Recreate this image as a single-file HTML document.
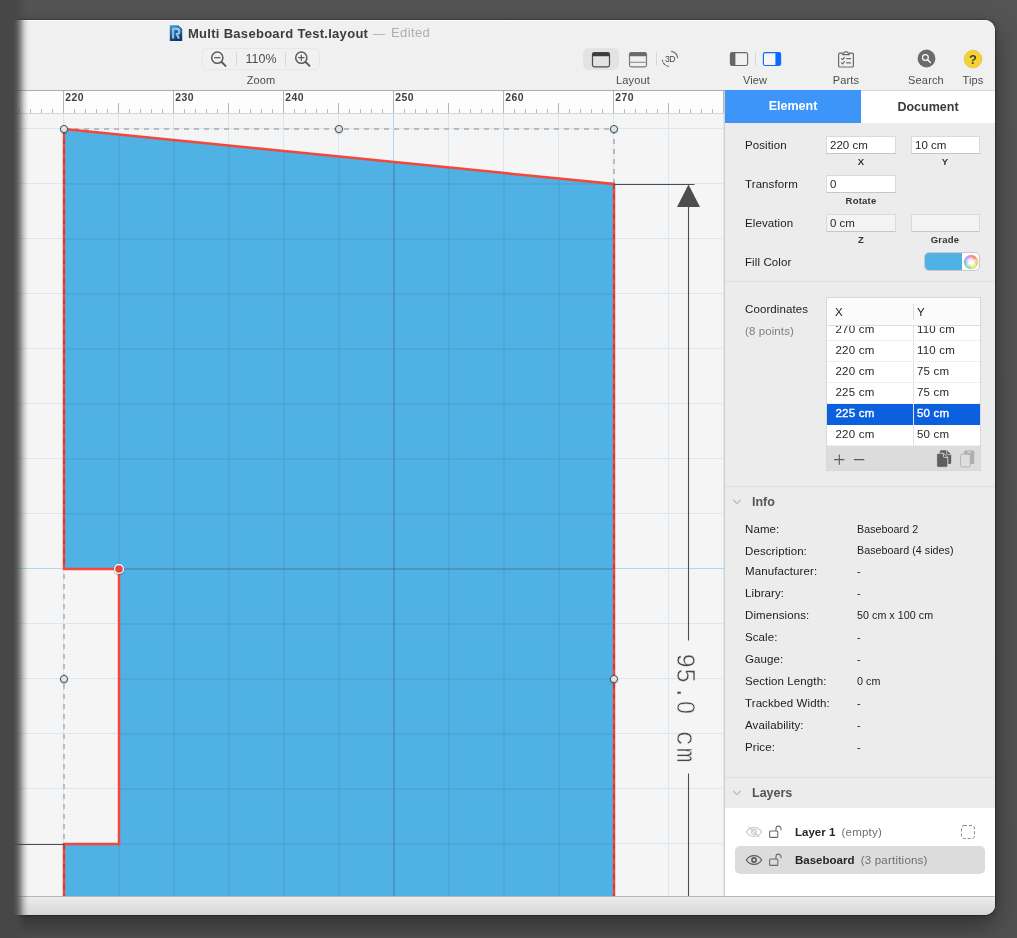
<!DOCTYPE html>
<html lang="en">
<head>
<meta charset="utf-8">
<title>Multi Baseboard Test.layout</title>
<style>
*{box-sizing:border-box;margin:0;padding:0}
html,body{width:1017px;height:938px;overflow:hidden}
body{background:#555;font-family:"Liberation Sans",sans-serif;font-size:12px;color:#262626;position:relative}
.bgshade{position:absolute;left:0;top:0;width:1017px;height:938px;background:linear-gradient(to bottom,#545454 0,#505050 100%)}
.win{position:absolute;left:-30px;top:20px;width:1025px;height:895px;border-radius:10px;background:#f0f0f0;
 box-shadow:0 0 0 0.5px rgba(0,0,0,0.45),0 11px 24px rgba(0,0,0,0.38),0 1px 6px rgba(0,0,0,0.18);overflow:hidden}
.page{position:absolute;left:30px;top:-20px;width:1017px;height:938px;will-change:transform}
.abs{position:absolute}
.tb{left:0;top:20px;width:995px;height:70px;background:#f0f0f0;border-top:1px solid #fbfbfb}
.tbline{left:0;top:90px;width:725px;height:1px;background:#adadad}
.title{left:188px;top:26px;height:16px;line-height:16px;font-size:13px;font-weight:bold;color:#3c3c3c;white-space:nowrap;letter-spacing:0.29px}
.dash{left:373px;top:33.5px;width:12px;height:1.8px;background:#b8b8b8}
.edited{left:391px;top:25px;letter-spacing:0.38px;height:16px;line-height:16px;font-size:13px;color:#aeaeae;white-space:nowrap}
.lbl{font-size:11px;color:#4c4c4c;height:14px;line-height:14px;text-align:center;white-space:nowrap;letter-spacing:0.15px}
.seg{left:202px;top:48px;width:118px;height:22px;border-radius:6px;border:1px solid #e7e7e7;background:#f1f1f1}
.vsep{width:1px;background:#d9d9d9}
.zoomv{left:238px;top:52px;width:46px;height:14px;line-height:14px;font-size:12.5px;color:#4c4c4c;text-align:center}
.selbtn{left:583px;top:48px;width:36px;height:22px;border-radius:6px;background:#e3e3e3}
.fade{left:0;top:0;width:32px;height:938px;background:linear-gradient(to right,#474747 0,#474747 13.3px,rgba(71,71,71,0.9) 16.4px,rgba(71,71,71,0.68) 19.6px,rgba(71,71,71,0.44) 22px,rgba(71,71,71,0.24) 24px,rgba(71,71,71,0.1) 26.3px,rgba(71,71,71,0.02) 28.3px,rgba(71,71,71,0) 29.6px)}
.cv{position:absolute;left:0;top:90px}
.status{left:0;top:896px;width:995px;height:19px;background:linear-gradient(#ececec,#d6d6d6);border-top:1px solid #b6b6b6}
/* sidebar */
.sb{left:725px;top:91px;width:270px;height:805px;background:#ececec}
.sbl{left:724px;top:91px;width:1px;height:805px;background:#d0d0d0}
.tabE{left:725px;top:90px;width:136px;height:33px;background:#3d94f9;color:#fff;font-weight:bold;font-size:12.5px;line-height:33px;text-align:center}
.tabD{left:861px;top:90px;width:134px;height:33px;background:#fff;border-top:1px solid #d6d6d6;color:#3a3a3a;font-weight:bold;font-size:12.5px;line-height:33px;text-align:center}
.fl{font-size:11.5px;color:#1c1c1c;height:16px;line-height:16px;white-space:nowrap;letter-spacing:0.1px}
.fld{height:18px;background:#fff;border:1px solid #dadada;border-bottom-color:#c6c6c6;font-size:11.5px;line-height:16px;padding-left:3px;color:#262626;white-space:nowrap}
.fld.dis{background:#f3f3f3}
.sub{font-size:9.5px;font-weight:bold;color:#333;height:12px;line-height:12px;text-align:center;white-space:nowrap;letter-spacing:0.2px}
.hr{left:725px;width:270px;height:1px;background:#e0e0e0}
.tblwrap{left:826px;top:297px;width:155px;height:174px;background:#fff;border:1px solid #d8d8d8;overflow:hidden}
.cell{font-size:11.5px;color:#202020;height:21px;line-height:21px;white-space:nowrap;letter-spacing:0.2px}
.selc{-webkit-text-stroke:0.35px #fff}
.il{font-size:11.5px;color:#1c1c1c;height:16px;line-height:16px;white-space:nowrap;letter-spacing:0.1px}
.iv{font-size:10.7px;color:#1c1c1c;letter-spacing:0.05px;height:16px;line-height:16px;white-space:nowrap}
.sh{font-size:12.5px;font-weight:bold;color:#555;height:18px;line-height:18px;white-space:nowrap}
.lay{left:725px;top:808px;width:270px;height:88px;background:#fff}
.lrow{left:735px;top:846px;width:250px;height:28px;background:#dcdcdc;border-radius:5px}
.ln{font-size:11.5px;font-weight:bold;color:#262626;height:16px;line-height:16px;white-space:nowrap}
.ln span{font-weight:normal;color:#6e6e6e;margin-left:3px;letter-spacing:0.22px}
</style>
</head>
<body>
<div class="bgshade"></div>
<div class="win"><div class="page">
<div class="abs tb"></div>
<svg class="abs" style="left:169px;top:24px" width="14" height="18" viewBox="0 0 14 18">
 <defs><linearGradient id="dg" x1="0" y1="0" x2="0.35" y2="1"><stop offset="0" stop-color="#35a6dc"/><stop offset="0.5" stop-color="#1c6aa8"/><stop offset="1" stop-color="#0b3a6c"/></linearGradient></defs>
 <path d="M0.800 1.200H9.400L13.200 5V17H0.800Z" fill="url(#dg)"/>
 <path d="M4.200 14.600V4.800H7.400C9.500 4.800 10.400 5.900 10.400 7.400C10.400 8.900 9.500 10 7.600 10L10 14.600" fill="none" stroke="#dfe9f3" stroke-width="1.900" stroke-linejoin="round"/>
 <path d="M4.200 14.600V4.800H7.400C9.500 4.800 10.400 5.900 10.400 7.400C10.400 8.900 9.500 10 7.600 10L10 14.600" fill="none" stroke="#2a78b4" stroke-width="0.600" stroke-linejoin="round"/>
</svg>
<div class="abs title">Multi Baseboard Test.layout</div>
<div class="abs dash"></div>
<div class="abs edited">Edited</div>
<div class="abs seg"></div>
<div class="abs vsep" style="left:236px;top:52px;height:14px"></div>
<div class="abs vsep" style="left:285px;top:52px;height:14px"></div>
<svg class="abs" style="left:208px;top:49px" width="22" height="20" viewBox="0 0 22 20" fill="none" stroke="#5a5a5a" stroke-width="1.4" stroke-linecap="round">
 <circle cx="9.3" cy="8.7" r="5.6" stroke-width="1.5"/><path d="M13.6 13L17.5 16.900" stroke-width="2"/><path d="M6.600 8.700H12" stroke-width="1.200"/>
</svg>
<div class="abs zoomv">110%</div>
<svg class="abs" style="left:292px;top:49px" width="22" height="20" viewBox="0 0 22 20" fill="none" stroke="#5a5a5a" stroke-width="1.4" stroke-linecap="round">
 <circle cx="9.3" cy="8.7" r="5.6" stroke-width="1.5"/><path d="M13.6 13L17.500 16.900" stroke-width="2"/><path d="M6.600 8.700H12M9.300 6V11.400" stroke-width="1.200"/>
</svg>
<div class="abs lbl" style="left:231px;top:73px;width:60px">Zoom</div>
<div class="abs selbtn"></div>
<svg class="abs" style="left:590px;top:50px" width="22" height="19" viewBox="0 0 22 19">
 <rect x="2.5" y="2.500" width="17" height="14.300" rx="1.800" fill="none" stroke="#4a4a4a" stroke-width="1.200"/>
 <path d="M2.500 6.200V4.300a1.800 1.800 0 0 1 1.800-1.800H17.700a1.800 1.800 0 0 1 1.800 1.800V6.200Z" fill="#3c3c3c"/>
</svg>
<svg class="abs" style="left:627px;top:50px" width="22" height="19" viewBox="0 0 22 19">
 <rect x="2.500" y="2.500" width="17" height="14.300" rx="1.800" fill="none" stroke="#787878" stroke-width="1.200"/>
 <path d="M2.500 6.200V4.300a1.800 1.800 0 0 1 1.800-1.800H17.700a1.800 1.800 0 0 1 1.800 1.800V6.200Z" fill="#6a6a6a"/>
 <path d="M2.500 12.300H19.500" stroke="#8e8e8e" stroke-width="1.100"/>
</svg>
<div class="abs vsep" style="left:656px;top:52px;height:14px"></div>
<svg class="abs" style="left:659px;top:48px" width="22" height="22" viewBox="0 0 22 22" fill="none">
 <path d="M12.60 3.37A7.7 7.7 0 0 1 18.63 9.83" stroke="#6a6a6a" stroke-width="1.1" stroke-linecap="round"/>
 <path d="M9.66 18.48A7.7 7.7 0 0 1 3.37 11.97" stroke="#6a6a6a" stroke-width="1.1" stroke-linecap="round" stroke-dasharray="2.6 1.4"/>
 <text x="11" y="14" text-anchor="middle" font-family="'Liberation Sans',sans-serif" font-size="8.6" letter-spacing="-0.4" fill="#4a4a4a" stroke="none">3D</text>
</svg>
<div class="abs lbl" style="left:603px;top:73px;width:60px">Layout</div>
<svg class="abs" style="left:728px;top:50px" width="22" height="18" viewBox="0 0 22 18">
 <rect x="2.4" y="2.6" width="17.2" height="12.9" rx="1.800" fill="none" stroke="#6a6a6a" stroke-width="1.150"/>
 <path d="M2.400 4.400a1.800 1.800 0 0 1 1.800-1.800H7.400V15.500H4.200a1.800 1.800 0 0 1-1.800-1.800Z" fill="#666"/>
</svg>
<div class="abs vsep" style="left:755px;top:52px;height:14px"></div>
<svg class="abs" style="left:761px;top:50px" width="22" height="18" viewBox="0 0 22 18">
 <rect x="2.400" y="2.600" width="17.200" height="12.900" rx="1.800" fill="#f6f6f6" stroke="#0a6cff" stroke-width="1.150"/>
 <path d="M19.600 4.400a1.800 1.800 0 0 0-1.800-1.800H14.400V15.500H17.800a1.800 1.800 0 0 0 1.800-1.800Z" fill="#0a6cff"/>
</svg>
<div class="abs lbl" style="left:725px;top:73px;width:60px">View</div>
<svg class="abs" style="left:836px;top:49px" width="20" height="20" viewBox="0 0 20 20" fill="none" stroke="#6a6a6a" stroke-width="1.2" stroke-linecap="round" stroke-linejoin="round">
 <path d="M6.4 4.2H3.8a1.2 1.2 0 0 0-1.2 1.2V16.8a1.2 1.2 0 0 0 1.2 1.2H16.2a1.2 1.2 0 0 0 1.2-1.2V5.4a1.2 1.2 0 0 0-1.2-1.2H13.6"/>
 <path d="M6.6 5.6V4.4L8.2 3.9A1.9 1.9 0 0 1 11.8 3.9L13.4 4.4V5.6Z"/>
 <path d="M5.6 9.6L6.6 10.6L8.4 8.4M10.6 9.6H14.6M5.6 13.8L6.6 14.8L8.4 12.6M10.6 13.8H14.6"/>
</svg>
<div class="abs lbl" style="left:816px;top:73px;width:60px">Parts</div>
<svg class="abs" style="left:916px;top:48px" width="22" height="22" viewBox="0 0 22 22">
 <circle cx="10.5" cy="10.5" r="8.9" fill="#6b6b6b"/>
 <circle cx="9.4" cy="9.5" r="2.9" fill="none" stroke="#fff" stroke-width="1.2"/>
 <path d="M11.6 11.7L14.4 14.5" stroke="#fff" stroke-width="1.3" stroke-linecap="round"/>
</svg>
<div class="abs lbl" style="left:896px;top:73px;width:60px">Search</div>
<svg class="abs" style="left:962px;top:48px" width="22" height="22" viewBox="0 0 22 22">
 <circle cx="11" cy="11" r="8.8" fill="#f6d230" stroke="#e0b92a" stroke-width="0.6"/>
 <text x="11" y="15.6" text-anchor="middle" font-family="'Liberation Sans',sans-serif" font-weight="bold" font-size="13" fill="#3f3f3f">?</text>
</svg>
<div class="abs lbl" style="left:943px;top:73px;width:60px">Tips</div>

<svg class="cv" width="725" height="806" viewBox="0 90 725 806">
<rect x="0" y="90" width="725" height="24" fill="#fdfdfd"/>
<rect x="0" y="114" width="725" height="782" fill="#f5f5f5"/>
<g><rect x="8" y="114" width="1" height="782" fill="#d7e8f2"/><rect x="63" y="114" width="1" height="782" fill="#d7e8f2"/><rect x="118" y="114" width="1" height="782" fill="#d7e8f2"/><rect x="173" y="114" width="1" height="782" fill="#d7e8f2"/><rect x="228" y="114" width="1" height="782" fill="#d7e8f2"/><rect x="283" y="114" width="1" height="782" fill="#d7e8f2"/><rect x="338" y="114" width="1" height="782" fill="#d7e8f2"/><rect x="393" y="114" width="1" height="782" fill="#afd7ee"/><rect x="448" y="114" width="1" height="782" fill="#d7e8f2"/><rect x="503" y="114" width="1" height="782" fill="#d7e8f2"/><rect x="558" y="114" width="1" height="782" fill="#d7e8f2"/><rect x="613" y="114" width="1" height="782" fill="#d7e8f2"/><rect x="668" y="114" width="1" height="782" fill="#d7e8f2"/><rect x="723" y="114" width="1" height="782" fill="#d7e8f2"/><rect x="0" y="128" width="725" height="1" fill="#d7e8f2"/><rect x="0" y="183" width="725" height="1" fill="#d7e8f2"/><rect x="0" y="238" width="725" height="1" fill="#d7e8f2"/><rect x="0" y="293" width="725" height="1" fill="#d7e8f2"/><rect x="0" y="348" width="725" height="1" fill="#d7e8f2"/><rect x="0" y="403" width="725" height="1" fill="#d7e8f2"/><rect x="0" y="458" width="725" height="1" fill="#d7e8f2"/><rect x="0" y="513" width="725" height="1" fill="#d7e8f2"/><rect x="0" y="568" width="725" height="1" fill="#afd7ee"/><rect x="0" y="623" width="725" height="1" fill="#d7e8f2"/><rect x="0" y="678" width="725" height="1" fill="#d7e8f2"/><rect x="0" y="733" width="725" height="1" fill="#d7e8f2"/><rect x="0" y="788" width="725" height="1" fill="#d7e8f2"/><rect x="0" y="843" width="725" height="1" fill="#d7e8f2"/></g>
<polygon points="64,129 614,184 614,1229 64,1229 64,844 119,844 119,569 64,569" fill="#4fb1e4"/>
<clipPath id="shp"><polygon points="64,129 614,184 614,1229 64,1229 64,844 119,844 119,569 64,569"/></clipPath>
<g clip-path="url(#shp)"><rect x="8" y="114" width="2" height="782" fill="rgba(62,80,101,0.095)"/><rect x="63" y="114" width="2" height="782" fill="rgba(62,80,101,0.095)"/><rect x="118" y="114" width="2" height="782" fill="rgba(62,80,101,0.095)"/><rect x="173" y="114" width="2" height="782" fill="rgba(62,80,101,0.095)"/><rect x="228" y="114" width="2" height="782" fill="rgba(62,80,101,0.095)"/><rect x="283" y="114" width="2" height="782" fill="rgba(62,80,101,0.095)"/><rect x="338" y="114" width="2" height="782" fill="rgba(62,80,101,0.095)"/><rect x="393" y="114" width="2" height="782" fill="rgba(62,80,101,0.27)"/><rect x="448" y="114" width="2" height="782" fill="rgba(62,80,101,0.095)"/><rect x="503" y="114" width="2" height="782" fill="rgba(62,80,101,0.095)"/><rect x="558" y="114" width="2" height="782" fill="rgba(62,80,101,0.095)"/><rect x="613" y="114" width="2" height="782" fill="rgba(62,80,101,0.095)"/><rect x="668" y="114" width="2" height="782" fill="rgba(62,80,101,0.095)"/><rect x="723" y="114" width="2" height="782" fill="rgba(62,80,101,0.095)"/><rect x="0" y="128" width="725" height="2" fill="rgba(62,80,101,0.095)"/><rect x="0" y="183" width="725" height="2" fill="rgba(62,80,101,0.095)"/><rect x="0" y="238" width="725" height="2" fill="rgba(62,80,101,0.095)"/><rect x="0" y="293" width="725" height="2" fill="rgba(62,80,101,0.095)"/><rect x="0" y="348" width="725" height="2" fill="rgba(62,80,101,0.095)"/><rect x="0" y="403" width="725" height="2" fill="rgba(62,80,101,0.095)"/><rect x="0" y="458" width="725" height="2" fill="rgba(62,80,101,0.095)"/><rect x="0" y="513" width="725" height="2" fill="rgba(62,80,101,0.095)"/><rect x="0" y="568" width="725" height="2" fill="rgba(62,80,101,0.27)"/><rect x="0" y="623" width="725" height="2" fill="rgba(62,80,101,0.095)"/><rect x="0" y="678" width="725" height="2" fill="rgba(62,80,101,0.095)"/><rect x="0" y="733" width="725" height="2" fill="rgba(62,80,101,0.095)"/><rect x="0" y="788" width="725" height="2" fill="rgba(62,80,101,0.095)"/><rect x="0" y="843" width="725" height="2" fill="rgba(62,80,101,0.095)"/></g>
<rect x="64" y="129" width="550" height="1100" fill="none" stroke="#a9adb0" stroke-width="1.5" stroke-dasharray="5 5"/>
<polygon points="64,129 614,184 614,1229 64,1229 64,844 119,844 119,569 64,569" fill="none" stroke="#f4473c" stroke-width="2.5" stroke-linejoin="miter"/>
<path d="M64 129V569M64 844V900M614 184V900" fill="none" stroke="rgba(120,30,30,0.45)" stroke-width="1.2" stroke-dasharray="5 5"/>
<g stroke="#4d4d4d" stroke-width="1.1" fill="none"><path d="M614 184.5H694.5"/><path d="M688.5 200V640.5M688.5 773.5V896"/><path d="M0 844.5H64"/></g>
<polygon points="688.5,184.5 700,207 677,207" fill="#4d4d4d"/>
<text transform="translate(677.3 0) rotate(90) scale(0.9 1)" y="0" font-family="'Liberation Mono', monospace" font-size="27.5" fill="#4a4a4a" stroke="#f5f5f5" stroke-width="0.55" paint-order="fill stroke"><tspan x="725.9 742.4 761.4">95.</tspan><tspan x="779.0" font-family="'Liberation Sans', sans-serif" font-size="25.8">0</tspan><tspan x="795.1 812.2 830.9"> cm</tspan></text>
<circle cx="64" cy="129.8" r="4.4" fill="rgba(0,0,0,0.15)"/>
<circle cx="64" cy="129" r="3.6" fill="#e2e2e2" stroke="#3d5560" stroke-width="1"/>
<circle cx="339" cy="129.8" r="4.4" fill="rgba(0,0,0,0.15)"/>
<circle cx="339" cy="129" r="3.6" fill="#e2e2e2" stroke="#3d5560" stroke-width="1"/>
<circle cx="614" cy="129.8" r="4.4" fill="rgba(0,0,0,0.15)"/>
<circle cx="614" cy="129" r="3.6" fill="#e2e2e2" stroke="#3d5560" stroke-width="1"/>
<circle cx="64" cy="679.8" r="4.4" fill="rgba(0,0,0,0.15)"/>
<circle cx="64" cy="679" r="3.6" fill="#e2e2e2" stroke="#3d5560" stroke-width="1"/>
<circle cx="614" cy="679.8" r="4.4" fill="rgba(0,0,0,0.15)"/>
<circle cx="614" cy="679" r="3.6" fill="#e2e2e2" stroke="#3d5560" stroke-width="1"/>
<circle cx="119" cy="570" r="5.6" fill="rgba(0,0,0,0.15)"/>
<circle cx="119" cy="569" r="4.4" fill="#e8463d" stroke="#fff" stroke-width="1.2"/>
<rect x="8" y="103" width="1" height="11" fill="#b4b4b4"/><rect x="19" y="109" width="1" height="5" fill="#b8b8b8"/><rect x="30" y="109" width="1" height="5" fill="#b8b8b8"/><rect x="41" y="109" width="1" height="5" fill="#b8b8b8"/><rect x="52" y="109" width="1" height="5" fill="#b8b8b8"/><rect x="63" y="91" width="1" height="23" fill="#b4b4b4"/><rect x="74" y="109" width="1" height="5" fill="#b8b8b8"/><rect x="85" y="109" width="1" height="5" fill="#b8b8b8"/><rect x="96" y="109" width="1" height="5" fill="#b8b8b8"/><rect x="107" y="109" width="1" height="5" fill="#b8b8b8"/><rect x="118" y="103" width="1" height="11" fill="#b4b4b4"/><rect x="129" y="109" width="1" height="5" fill="#b8b8b8"/><rect x="140" y="109" width="1" height="5" fill="#b8b8b8"/><rect x="151" y="109" width="1" height="5" fill="#b8b8b8"/><rect x="162" y="109" width="1" height="5" fill="#b8b8b8"/><rect x="173" y="91" width="1" height="23" fill="#b4b4b4"/><rect x="184" y="109" width="1" height="5" fill="#b8b8b8"/><rect x="195" y="109" width="1" height="5" fill="#b8b8b8"/><rect x="206" y="109" width="1" height="5" fill="#b8b8b8"/><rect x="217" y="109" width="1" height="5" fill="#b8b8b8"/><rect x="228" y="103" width="1" height="11" fill="#b4b4b4"/><rect x="239" y="109" width="1" height="5" fill="#b8b8b8"/><rect x="250" y="109" width="1" height="5" fill="#b8b8b8"/><rect x="261" y="109" width="1" height="5" fill="#b8b8b8"/><rect x="272" y="109" width="1" height="5" fill="#b8b8b8"/><rect x="283" y="91" width="1" height="23" fill="#b4b4b4"/><rect x="294" y="109" width="1" height="5" fill="#b8b8b8"/><rect x="305" y="109" width="1" height="5" fill="#b8b8b8"/><rect x="316" y="109" width="1" height="5" fill="#b8b8b8"/><rect x="327" y="109" width="1" height="5" fill="#b8b8b8"/><rect x="338" y="103" width="1" height="11" fill="#b4b4b4"/><rect x="349" y="109" width="1" height="5" fill="#b8b8b8"/><rect x="360" y="109" width="1" height="5" fill="#b8b8b8"/><rect x="371" y="109" width="1" height="5" fill="#b8b8b8"/><rect x="382" y="109" width="1" height="5" fill="#b8b8b8"/><rect x="393" y="91" width="1" height="23" fill="#b4b4b4"/><rect x="404" y="109" width="1" height="5" fill="#b8b8b8"/><rect x="415" y="109" width="1" height="5" fill="#b8b8b8"/><rect x="426" y="109" width="1" height="5" fill="#b8b8b8"/><rect x="437" y="109" width="1" height="5" fill="#b8b8b8"/><rect x="448" y="103" width="1" height="11" fill="#b4b4b4"/><rect x="459" y="109" width="1" height="5" fill="#b8b8b8"/><rect x="470" y="109" width="1" height="5" fill="#b8b8b8"/><rect x="481" y="109" width="1" height="5" fill="#b8b8b8"/><rect x="492" y="109" width="1" height="5" fill="#b8b8b8"/><rect x="503" y="91" width="1" height="23" fill="#b4b4b4"/><rect x="514" y="109" width="1" height="5" fill="#b8b8b8"/><rect x="525" y="109" width="1" height="5" fill="#b8b8b8"/><rect x="536" y="109" width="1" height="5" fill="#b8b8b8"/><rect x="547" y="109" width="1" height="5" fill="#b8b8b8"/><rect x="558" y="103" width="1" height="11" fill="#b4b4b4"/><rect x="569" y="109" width="1" height="5" fill="#b8b8b8"/><rect x="580" y="109" width="1" height="5" fill="#b8b8b8"/><rect x="591" y="109" width="1" height="5" fill="#b8b8b8"/><rect x="602" y="109" width="1" height="5" fill="#b8b8b8"/><rect x="613" y="91" width="1" height="23" fill="#b4b4b4"/><rect x="624" y="109" width="1" height="5" fill="#b8b8b8"/><rect x="635" y="109" width="1" height="5" fill="#b8b8b8"/><rect x="646" y="109" width="1" height="5" fill="#b8b8b8"/><rect x="657" y="109" width="1" height="5" fill="#b8b8b8"/><rect x="668" y="103" width="1" height="11" fill="#b4b4b4"/><rect x="679" y="109" width="1" height="5" fill="#b8b8b8"/><rect x="690" y="109" width="1" height="5" fill="#b8b8b8"/><rect x="701" y="109" width="1" height="5" fill="#b8b8b8"/><rect x="712" y="109" width="1" height="5" fill="#b8b8b8"/><rect x="723" y="91" width="1" height="23" fill="#b4b4b4"/>
<rect x="0" y="113" width="725" height="1" fill="#d6d6d6"/>
<text x="65.2" y="101" font-family="'Liberation Sans', sans-serif" font-weight="bold" font-size="10.4" letter-spacing="0.55" fill="#404040">220</text>
<text x="175.2" y="101" font-family="'Liberation Sans', sans-serif" font-weight="bold" font-size="10.4" letter-spacing="0.55" fill="#404040">230</text>
<text x="285.2" y="101" font-family="'Liberation Sans', sans-serif" font-weight="bold" font-size="10.4" letter-spacing="0.55" fill="#404040">240</text>
<text x="395.2" y="101" font-family="'Liberation Sans', sans-serif" font-weight="bold" font-size="10.4" letter-spacing="0.55" fill="#404040">250</text>
<text x="505.2" y="101" font-family="'Liberation Sans', sans-serif" font-weight="bold" font-size="10.4" letter-spacing="0.55" fill="#404040">260</text>
<text x="615.2" y="101" font-family="'Liberation Sans', sans-serif" font-weight="bold" font-size="10.4" letter-spacing="0.55" fill="#404040">270</text>
</svg>
<div class="abs tbline"></div>
<div class="abs sb"></div>
<div class="abs sbl"></div>
<div class="abs tabE">Element</div>
<div class="abs tabD">Document</div>
<div class="abs fl" style="left:745px;top:137px">Position</div>
<div class="abs fld" style="left:826px;top:136px;width:70px">220 cm</div>
<div class="abs fld" style="left:911px;top:136px;width:69px">10 cm</div>
<div class="abs sub" style="left:831px;top:156px;width:60px">X</div>
<div class="abs sub" style="left:915px;top:156px;width:60px">Y</div>
<div class="abs fl" style="left:745px;top:176px">Transform</div>
<div class="abs fld" style="left:826px;top:175px;width:70px">0</div>
<div class="abs sub" style="left:831px;top:195px;width:60px">Rotate</div>
<div class="abs fl" style="left:745px;top:215px">Elevation</div>
<div class="abs fld dis" style="left:826px;top:214px;width:70px">0 cm</div>
<div class="abs fld dis" style="left:911px;top:214px;width:69px"></div>
<div class="abs sub" style="left:831px;top:234px;width:60px">Z</div>
<div class="abs sub" style="left:915px;top:234px;width:60px">Grade</div>
<div class="abs fl" style="left:745px;top:254px">Fill Color</div>
<div class="abs" style="left:924px;top:252px;width:56px;height:19px;border-radius:5px;background:#fff;border:1px solid #c9c9c9;overflow:hidden"><div class="abs" style="left:0;top:0;width:37px;height:17px;background:#4fb1e4"></div>
<svg class="abs" style="left:38px;top:1px" width="16" height="16" viewBox="0 0 16 16"><defs><radialGradient id="cw" cx="0.5" cy="0.5" r="0.5"><stop offset="0" stop-color="#fff"/><stop offset="0.35" stop-color="#fff" stop-opacity="0.9"/><stop offset="1" stop-color="#fff" stop-opacity="0"/></radialGradient></defs>
<g transform="translate(8 8)"><path d="M0 0L0-7A7 7 0 0 1 6.06-3.5Z" fill="#ff5a5a"/><path d="M0 0L6.06-3.5A7 7 0 0 1 6.06 3.5Z" fill="#ffb640"/><path d="M0 0L6.06 3.5A7 7 0 0 1 0 7Z" fill="#d8e84a"/><path d="M0 0L0 7A7 7 0 0 1-6.06 3.5Z" fill="#5fd98a"/><path d="M0 0L-6.06 3.5A7 7 0 0 1-6.06-3.5Z" fill="#5aa8f0"/><path d="M0 0L-6.06-3.5A7 7 0 0 1 0-7Z" fill="#c56cf0"/><circle r="7" fill="url(#cw)"/><circle r="7" fill="none" stroke="#d0d0d0" stroke-width="0.6"/></g></svg></div>
<div class="abs hr" style="top:281px"></div>
<div class="abs fl" style="left:745px;top:301px">Coordinates</div>
<div class="abs fl" style="left:745px;top:323px;color:#808080;font-size:11.5px">(8 points)</div>
<div class="abs tblwrap">
<div class="abs" style="left:0;top:0;width:153px;height:28px;background:#fbfbfb;border-bottom:1px solid #dedede"></div>
<div class="abs cell" style="left:8px;top:4px">X</div><div class="abs cell" style="left:90px;top:4px">Y</div>
<div class="abs" style="left:86px;top:6px;width:1px;height:16px;background:#dcdcdc"></div>
<div class="abs" style="left:0;top:28px;width:153px;height:120px;overflow:hidden">
<div class="abs" style="left:0;top:-6.5px;width:153px;height:21px;background:#fff;border-bottom:1px dotted #e1e1e1"></div>
<div class="abs cell" style="left:8.5px;top:-7.5px;color:#262626">270 cm</div><div class="abs cell" style="left:90px;top:-7.5px;color:#262626">110 cm</div>
<div class="abs" style="left:0;top:14.5px;width:153px;height:21px;background:#fff;border-bottom:1px dotted #e1e1e1"></div>
<div class="abs cell" style="left:8.5px;top:13.5px;color:#262626">220 cm</div><div class="abs cell" style="left:90px;top:13.5px;color:#262626">110 cm</div>
<div class="abs" style="left:0;top:35.5px;width:153px;height:21px;background:#fff;border-bottom:1px dotted #e1e1e1"></div>
<div class="abs cell" style="left:8.5px;top:34.5px;color:#262626">220 cm</div><div class="abs cell" style="left:90px;top:34.5px;color:#262626">75 cm</div>
<div class="abs" style="left:0;top:56.5px;width:153px;height:21px;background:#fff;border-bottom:1px dotted #e1e1e1"></div>
<div class="abs cell" style="left:8.5px;top:55.5px;color:#262626">225 cm</div><div class="abs cell" style="left:90px;top:55.5px;color:#262626">75 cm</div>
<div class="abs" style="left:0;top:77.5px;width:153px;height:21px;background:#0a60df;border-bottom:1px dotted #0a60df"></div>
<div class="abs cell selc" style="left:8.5px;top:76.5px;color:#fff">225 cm</div><div class="abs cell selc" style="left:90px;top:76.5px;color:#fff">50 cm</div>
<div class="abs" style="left:0;top:98.5px;width:153px;height:21px;background:#fff;border-bottom:1px dotted #e1e1e1"></div>
<div class="abs cell" style="left:8.5px;top:97.5px;color:#262626">220 cm</div><div class="abs cell" style="left:90px;top:97.5px;color:#262626">50 cm</div>
<div class="abs" style="left:86px;top:0;width:1px;height:120px;background:#e3e3e3"></div>
</div>
<div class="abs" style="left:0;top:148px;width:153px;height:25px;background:#dcdcdc"></div>
<svg class="abs" style="left:0;top:148px" width="153" height="25" viewBox="0 0 153 25" fill="none">
<path d="M7.2 13.6H17.4M12.3 8.5V18.700M27 13.600H37.300" stroke="#5a5a5a" stroke-width="1.100"/>
<path d="M114.200 4.200H119.800L124.200 8.600V16.400a1.500 1.500 0 0 1-1.500 1.500H114.200a1.500 1.500 0 0 1-1.500-1.500V5.700a1.500 1.500 0 0 1 1.500-1.500Z" fill="#5e5e5e"/>
<path d="M111.200 7.200H116.600L120.800 11.400V19.800a1.500 1.500 0 0 1-1.500 1.500H111.200a1.500 1.500 0 0 1-1.500-1.500V8.700a1.500 1.500 0 0 1 1.500-1.500Z" fill="#5e5e5e" stroke="#dcdcdc" stroke-width="0.900"/>
<path d="M116.400 7.400V10.400a1 1 0 0 0 1 1H120.600" stroke="#dcdcdc" stroke-width="0.900"/>
<path d="M119.600 4.400V7.600a1 1 0 0 0 1 1H124" stroke="#dcdcdc" stroke-width="0.800"/>
<rect x="137.200" y="4.600" width="10" height="13.400" rx="1.600" fill="#adadad"/>
<rect x="140" y="5.600" width="4.400" height="1.300" rx="0.600" fill="#d0d0d0"/>
<rect x="133.600" y="8.200" width="9.600" height="12.800" rx="1.600" fill="#dedede" stroke="#b4b4b4" stroke-width="1"/>
</svg>
</div>
<div class="abs hr" style="top:486px"></div>
<svg class="abs" style="left:731px;top:497px" width="12" height="10" viewBox="0 0 12 10" fill="none" stroke="#bdbdbd" stroke-width="1.3" stroke-linecap="round" stroke-linejoin="round"><path d="M2.6 3.2L6 6.600L9.400 3.200"/></svg>
<div class="abs sh" style="left:752px;top:493px">Info</div>
<div class="abs il" style="left:745px;top:521px">Name:</div><div class="abs iv" style="left:857px;top:521px">Baseboard 2</div>
<div class="abs il" style="left:745px;top:543px">Description:</div><div class="abs iv" style="left:857px;top:542px">Baseboard (4 sides)</div>
<div class="abs il" style="left:745px;top:563px">Manufacturer:</div><div class="abs iv" style="left:857px;top:563px">-</div>
<div class="abs il" style="left:745px;top:585px">Library:</div><div class="abs iv" style="left:857px;top:585px">-</div>
<div class="abs il" style="left:745px;top:607px">Dimensions:</div><div class="abs iv" style="left:857px;top:607px">50 cm x 100 cm</div>
<div class="abs il" style="left:745px;top:629px">Scale:</div><div class="abs iv" style="left:857px;top:629px">-</div>
<div class="abs il" style="left:745px;top:651px">Gauge:</div><div class="abs iv" style="left:857px;top:651px">-</div>
<div class="abs il" style="left:745px;top:673px">Section Length:</div><div class="abs iv" style="left:857px;top:673px">0 cm</div>
<div class="abs il" style="left:745px;top:695px">Trackbed Width:</div><div class="abs iv" style="left:857px;top:695px">-</div>
<div class="abs il" style="left:745px;top:717px">Availability:</div><div class="abs iv" style="left:857px;top:717px">-</div>
<div class="abs il" style="left:745px;top:739px">Price:</div><div class="abs iv" style="left:857px;top:739px">-</div>
<div class="abs hr" style="top:777px"></div>
<svg class="abs" style="left:731px;top:788px" width="12" height="10" viewBox="0 0 12 10" fill="none" stroke="#bdbdbd" stroke-width="1.3" stroke-linecap="round" stroke-linejoin="round"><path d="M2.6 3.2L6 6.600L9.400 3.200"/></svg>
<div class="abs sh" style="left:752px;top:784px">Layers</div>
<div class="abs lay"></div>
<div class="abs lrow"></div>
<svg class="abs" style="left:745px;top:824px" width="18" height="16" viewBox="0 0 18 16" fill="none" stroke="#c9c9c9" stroke-width="1.1" stroke-linecap="round"><path d="M1.3 8C3.2 5 5.8 3.6 9 3.6S14.800 5 16.700 8C14.800 11 12.200 12.400 9 12.400S3.200 11 1.300 8Z"/><circle cx="9" cy="8" r="2.400"/><path d="M4 3.200L14 12.800"/></svg>
<svg class="abs" style="left:745px;top:852px" width="18" height="16" viewBox="0 0 18 16" fill="none" stroke="#5a5a5a" stroke-width="1.200" stroke-linecap="round"><path d="M1.300 8C3.200 5 5.800 3.600 9 3.600S14.800 5 16.700 8C14.800 11 12.200 12.400 9 12.400S3.200 11 1.300 8Z"/><circle cx="9" cy="8" r="2.100" stroke-width="1.700"/></svg>
<svg class="abs" style="left:768px;top:824px" width="15" height="16" viewBox="0 0 15 16" fill="none" stroke="#6a6a6a" stroke-width="1.100" stroke-linejoin="round" stroke-linecap="round"><rect x="1.600" y="7" width="8.200" height="6.400" rx="1"/><path d="M8 6.800V4.600A2.500 2.500 0 0 1 13 4.600V5.800"/></svg>
<svg class="abs" style="left:768px;top:852px" width="15" height="16" viewBox="0 0 15 16" fill="none" stroke="#6a6a6a" stroke-width="1.100" stroke-linejoin="round" stroke-linecap="round"><rect x="1.600" y="7" width="8.200" height="6.400" rx="1"/><path d="M8 6.800V4.600A2.500 2.500 0 0 1 13 4.600V5.800"/></svg>
<div class="abs ln" style="left:795px;top:824px">Layer 1 <span>(empty)</span></div>
<div class="abs ln" style="left:795px;top:852px">Baseboard <span>(3 partitions)</span></div>
<svg class="abs" style="left:960px;top:824px" width="16" height="16" viewBox="0 0 16 16" fill="none"><rect x="1.500" y="1.500" width="13" height="13" rx="2.500" stroke="#8a8a8a" stroke-width="1" stroke-dasharray="3 2"/></svg>
<div class="abs status"></div>
</div></div>
<div class="abs fade"></div>
</body>
</html>
